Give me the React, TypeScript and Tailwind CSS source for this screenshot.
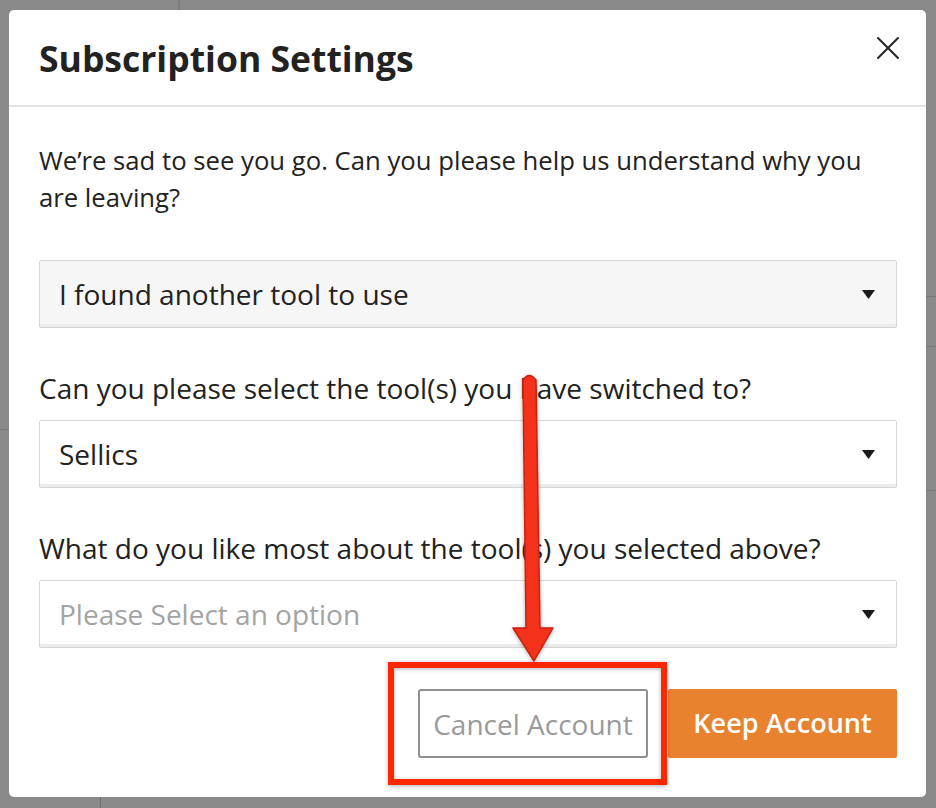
import { X } from 'lucide-react';

const font = { fontFamily: '"Open Sans", "Noto Sans", sans-serif' };

// Native-looking select with a solid caret on the right
const SelectBox = ({ value, placeholder, filled }: { value?: string; placeholder?: string; filled?: boolean }) => (
  <div
    className={`h-[68px] flex items-center justify-between pl-[19px] pr-[21px] border border-[#d6d6d6] rounded-[2px] shadow-[inset_0_-3px_0_#ececec] ${
      filled ? 'bg-[#f6f6f6]' : 'bg-white'
    }`}
  >
    <span className={`text-[28px] leading-none ${value ? 'text-[#222]' : 'text-[#a3a3a3]'}`}>{value ?? placeholder}</span>
    <svg width="13" height="9" viewBox="0 0 13 9">
      <path d="M0 0 H13 L6.5 9 Z" fill="#1a1a1a" />
    </svg>
  </div>
);

export default function App() {
  return (
    <div className="relative w-[936px] h-[808px] bg-[#8a8a8a] overflow-hidden" style={font}>
      {/* faint page behind the backdrop */}
      <div className="absolute left-[178px] top-0 w-[2px] h-[10px] bg-[#7c7c7c]" />
      <div className="absolute left-[100px] bottom-0 w-[1px] h-[11px] bg-[#6f6f6f]" />
      <div className="absolute left-0 top-[429px] w-[9px] h-[1px] bg-[#7a7a7a]" />
      <div className="absolute right-0 top-[296px] w-[10px] h-[1px] bg-[#7a7a7a]" />
      <div className="absolute right-0 top-[346px] w-[10px] h-[1px] bg-[#7a7a7a]" />
      <div className="absolute right-0 top-[490px] w-[10px] h-[1px] bg-[#7a7a7a]" />

      <div className="pt-[10px] pl-[9px]">
        <div className="w-[917px] h-[787px] bg-white rounded-[5px] flex flex-col">
          <div className="h-[97px] flex items-center justify-between pl-[30px] pr-[18px] border-b-2 border-[#e3e3e3]">
            <h1 className="text-[35.5px] font-bold text-[#222] leading-none pt-[2px]">Subscription Settings</h1>
            <X className="w-[40px] h-[40px] text-[#222] mb-[20px]" strokeWidth={1.2} />
          </div>

          <div className="flex flex-col pl-[30px] pr-[29px] pt-[35px]">
            <p className="text-[25.7px] leading-[37px] text-[#222] pr-[20px]">
              We’re sad to see you go. Can you please help us understand why you are leaving?
            </p>

            <div className="mt-[44px]">
              <SelectBox value="I found another tool to use" filled />
            </div>

            <label className="mt-[45px] mb-[17px] text-[28px] leading-[30px] text-[#222]">
              Can you please select the tool(s) you have switched to?
            </label>
            <SelectBox value="Sellics" />

            <label className="mt-[45px] mb-[17px] text-[28px] leading-[30px] text-[#222]">
              What do you like most about the tool(s) you selected above?
            </label>
            <SelectBox placeholder="Please Select an option" />

            <div className="mt-[41px] flex justify-end gap-[20px]">
              <button className="w-[230px] h-[69px] border-2 border-[#8f8f8f] rounded-[3px] text-[28px] text-[#9a9a9a] bg-white">
                Cancel Account
              </button>
              <button className="w-[229px] h-[69px] rounded-[2px] text-[27px] font-semibold text-white bg-[#e8822f]">
                Keep Account
              </button>
            </div>
          </div>
        </div>
      </div>

      {/* annotation: arrow and highlight box */}
      <svg className="absolute inset-0 pointer-events-none" width="936" height="808" viewBox="0 0 936 808">
        <defs>
          <filter id="sh" x="-20%" y="-20%" width="140%" height="140%">
            <feDropShadow dx="0" dy="1" stdDeviation="2" floodColor="#000" floodOpacity="0.3" />
          </filter>
        </defs>
        <g filter="url(#sh)">
          <path
            d="M523 380 Q529 371 536 380 L540 628 L553 628 L534 661 L513 628 L526 628 Z"
            fill="#f4311a"
            stroke="#c8210e"
            strokeWidth="1.5"
            strokeLinejoin="round"
          />
          <rect x="391" y="665" width="273" height="117" fill="none" stroke="#ff2600" strokeWidth="6" />
        </g>
      </svg>
    </div>
  );
}
